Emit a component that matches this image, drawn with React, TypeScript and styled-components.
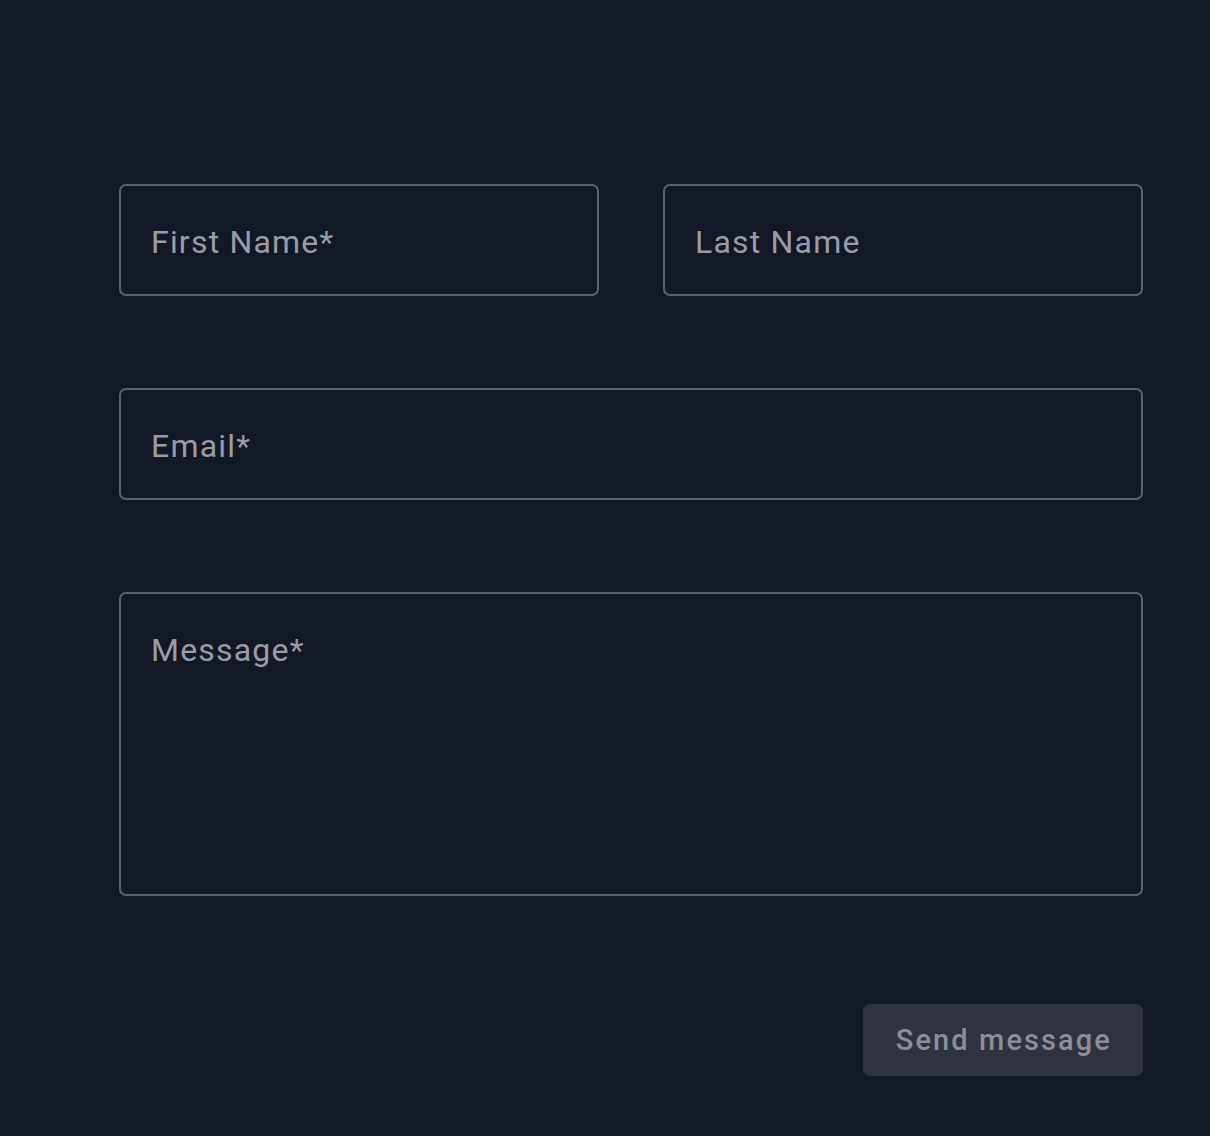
import * as React from "react";
import styled, { createGlobalStyle } from "styled-components";

const GlobalStyle = createGlobalStyle`
  html, body {
    margin: 0;
    padding: 0;
    background: #131826;
  }
  body {
    font-family: Roboto, "Liberation Sans", sans-serif;
  }
`;

const Page = styled.div`
  box-sizing: border-box;
  min-height: 1136px;
  padding: 184px 67px 60px 119px;
  background: #131826;
`;

const Form = styled.form`
  display: flex;
  flex-direction: column;
  gap: 92px;
`;

const Row = styled.div`
  display: grid;
  grid-template-columns: 1fr 1fr;
  column-gap: 64px;
`;

const fieldStyles = `
  box-sizing: border-box;
  width: 100%;
  margin: 0;
  padding: 0 30px;
  border: 2px solid #5d606d;
  border-radius: 7px;
  background: transparent;
  color: #c7c9d0;
  font-family: Roboto, "Liberation Sans", sans-serif;
  font-size: 32px;
  letter-spacing: 1.2px;
  outline: none;

  &::placeholder {
    color: #9b9da6;
    opacity: 1;
  }
`;

const Input = styled.input`
  ${fieldStyles}
  height: 112px;
  padding-top: 4px;
`;

const TextArea = styled.textarea`
  ${fieldStyles}
  display: block;
  height: 304px;
  padding-top: 32px;
  line-height: 48px;
  resize: none;
`;

const Actions = styled.div`
  display: flex;
  justify-content: flex-end;
  margin-top: 16px;
`;

const SendButton = styled.button`
  height: 72px;
  padding: 0 31px 0 33px;
  border: none;
  border-radius: 7px;
  background: #2f323f;
  color: #8d8f98;
  font-family: Roboto, "Liberation Sans", sans-serif;
  font-size: 29px;
  font-weight: 500;
  letter-spacing: 2.1px;
  cursor: pointer;
`;

export default function App() {
  return (
    <>
      <GlobalStyle />
      <Page>
        <Form onSubmit={(e) => e.preventDefault()}>
          <Row>
            <Input type="text" placeholder="First Name*" />
            <Input type="text" placeholder="Last Name" />
          </Row>
          <Input type="email" placeholder="Email*" />
          <TextArea placeholder="Message*" />
          <Actions>
            <SendButton type="submit">Send message</SendButton>
          </Actions>
        </Form>
      </Page>
    </>
  );
}
